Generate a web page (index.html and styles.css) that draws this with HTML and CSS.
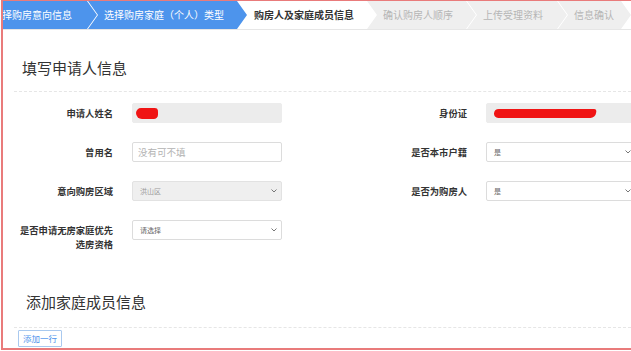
FILE: index.html
```html
<!DOCTYPE html>
<html lang="zh-CN">

<head>
  <meta charset="UTF-8">
  <meta name="viewport" content="width=device-width, initial-scale=1.0">
  <title>购房人及家庭成员信息</title>
  <link rel="stylesheet" href="styles.css">
</head>

<body>
  <div class="frame">
    <ol class="steps">
      <li class="step step-done">选择购房意向信息</li>
      <li class="step step-done">选择购房家庭（个人）类型</li>
      <li class="step step-current">购房人及家庭成员信息</li>
      <li class="step">确认购房人顺序</li>
      <li class="step">上传受理资料</li>
      <li class="step">信息确认</li>
    </ol>

    <div class="panel">
      <h2 class="panel-title">填写申请人信息</h2>

      <div class="form-rows">
        <div class="form-row">
          <div class="field">
            <label>申请人姓名</label>
            <div class="control control-readonly"><span class="redact redact-name"></span></div>
          </div>
          <div class="field">
            <label>身份证</label>
            <div class="control control-readonly"><span class="redact redact-id"></span></div>
          </div>
        </div>

        <div class="form-row">
          <div class="field">
            <label>曾用名</label>
            <input class="control control-input" type="text" placeholder="没有可不填">
          </div>
          <div class="field">
            <label>是否本市户籍</label>
            <div class="control control-select">
              <span>是</span>
              <svg class="chevron" width="6" height="4" viewBox="0 0 6 4"><path d="M0.5 0.5 L3 3 L5.5 0.5" fill="none" stroke="#777" stroke-width="1"/></svg>
            </div>
          </div>
        </div>

        <div class="form-row">
          <div class="field">
            <label>意向购房区域</label>
            <div class="control control-select control-disabled">
              <span>洪山区</span>
              <svg class="chevron" width="6" height="4" viewBox="0 0 6 4"><path d="M0.5 0.5 L3 3 L5.5 0.5" fill="none" stroke="#777" stroke-width="1"/></svg>
            </div>
          </div>
          <div class="field">
            <label>是否为购房人</label>
            <div class="control control-select">
              <span>是</span>
              <svg class="chevron" width="6" height="4" viewBox="0 0 6 4"><path d="M0.5 0.5 L3 3 L5.5 0.5" fill="none" stroke="#777" stroke-width="1"/></svg>
            </div>
          </div>
        </div>

        <div class="form-row">
          <div class="field">
            <label>是否申请无房家庭优先<br>选房资格</label>
            <div class="control control-select">
              <span>请选择</span>
              <svg class="chevron" width="6" height="4" viewBox="0 0 6 4"><path d="M0.5 0.5 L3 3 L5.5 0.5" fill="none" stroke="#777" stroke-width="1"/></svg>
            </div>
          </div>
        </div>
      </div>

      <h2 class="panel-title panel-title-members">添加家庭成员信息</h2>
      <button class="btn-add" type="button">添加一行</button>
    </div>
  </div>
</body>

</html>
```

FILE: styles.css
```css
/* Geral */
body {
  margin: 0;
  overflow: hidden;
  background: #fff;
  color: #333;
  font-family: "Noto Sans CJK SC", "Liberation Sans", sans-serif;
}

.frame {
  height: 347px;
  margin-left: 1px;
  overflow: hidden;
  border: 2px solid #e97b7b;
  border-top-width: 1px;
  border-right: none;
}

/* Passos */
.steps {
  display: flex;
  height: 28px;
  margin: 0;
  padding: 0;
  list-style: none;
  overflow: hidden;
  background: #fff;
  border-bottom: 1px solid #e6e6e6;
}

.step {
  flex: none;
  height: 28px;
  line-height: 28px;
  padding-left: 16px;
  box-sizing: border-box;
  margin-left: -9px;
  font-size: 10px;
  white-space: nowrap;
  color: #b5b5b5;
  background: #efefef;
  clip-path: polygon(0 0, calc(100% - 10px) 0, 100% 50%, calc(100% - 10px) 100%, 0 100%, 10px 50%);
}

.step:nth-child(1) { width: 121px; margin-left: -27px; }
.step:nth-child(2) { width: 159px; }
.step:nth-child(3) { width: 138px; }
.step:nth-child(4) { width: 109px; }
.step:nth-child(5) { width: 100px; }
.step:nth-child(6) { flex: 1; }

.step-done {
  background: #4d94ec;
  color: #fff;
}

.step-current {
  background: #fff;
  color: #333;
  font-weight: bold;
}

/* Painel */
.panel {
  padding-left: 11px;
}

.panel-title {
  margin: 0;
  padding: 28px 0 13px 8px;
  font-size: 15px;
  font-weight: normal;
  line-height: 20px;
  color: #333;
  border-bottom: 1px dashed #e6e6e6;
}

.panel-title-members {
  margin-top: 41px;
  padding: 0 0 15px 12px;
}

.form-rows {
  display: flex;
  flex-direction: column;
  gap: 19px;
  margin-top: 11px;
}

.form-row {
  display: flex;
  align-items: flex-start;
  padding-left: 4px;
}

.field {
  display: flex;
  align-items: flex-start;
  flex: none;
  width: 354px;
}

.field label {
  flex: none;
  width: 95px;
  margin-right: 19px;
  padding-top: 3px;
  text-align: right;
  font-size: 9.3px;
  font-weight: bold;
  line-height: 14px;
  color: #333;
}

.control {
  flex: none;
  display: flex;
  align-items: center;
  width: 150px;
  height: 20px;
  box-sizing: border-box;
  padding: 0 4px 0 7px;
  border: 1px solid #dcdcdc;
  border-radius: 2px;
  background: #fff;
  font-family: inherit;
  font-size: 7px;
  color: #666;
}

.control-readonly {
  background: #ececec;
  border-color: #ececec;
}

.control-input {
  padding-left: 5px;
  font-size: 9.5px;
  outline: none;
}

.control-input::placeholder {
  color: #b3b3b3;
}

.control-disabled {
  background: #efefef;
  border-color: #e2e2e2;
  color: #999;
}

.chevron {
  margin-left: auto;
}

.redact {
  display: block;
  background: #f01414;
}

.redact-name {
  width: 22px;
  height: 11px;
  margin-left: -4px;
  border-radius: 6px 4px 5px 7px;
}

.redact-id {
  width: 102px;
  height: 9px;
  border-radius: 5px 3px 6px 6px;
  transform: skewX(-8deg);
}

.btn-add {
  display: block;
  height: 17px;
  margin: 2px 0 0 4px;
  padding: 0 4px;
  border: 1px solid #a9c9ef;
  border-radius: 1px;
  background: #fff;
  color: #4f94ec;
  font-family: inherit;
  font-size: 8.5px;
  line-height: 15px;
  cursor: pointer;
}
```
